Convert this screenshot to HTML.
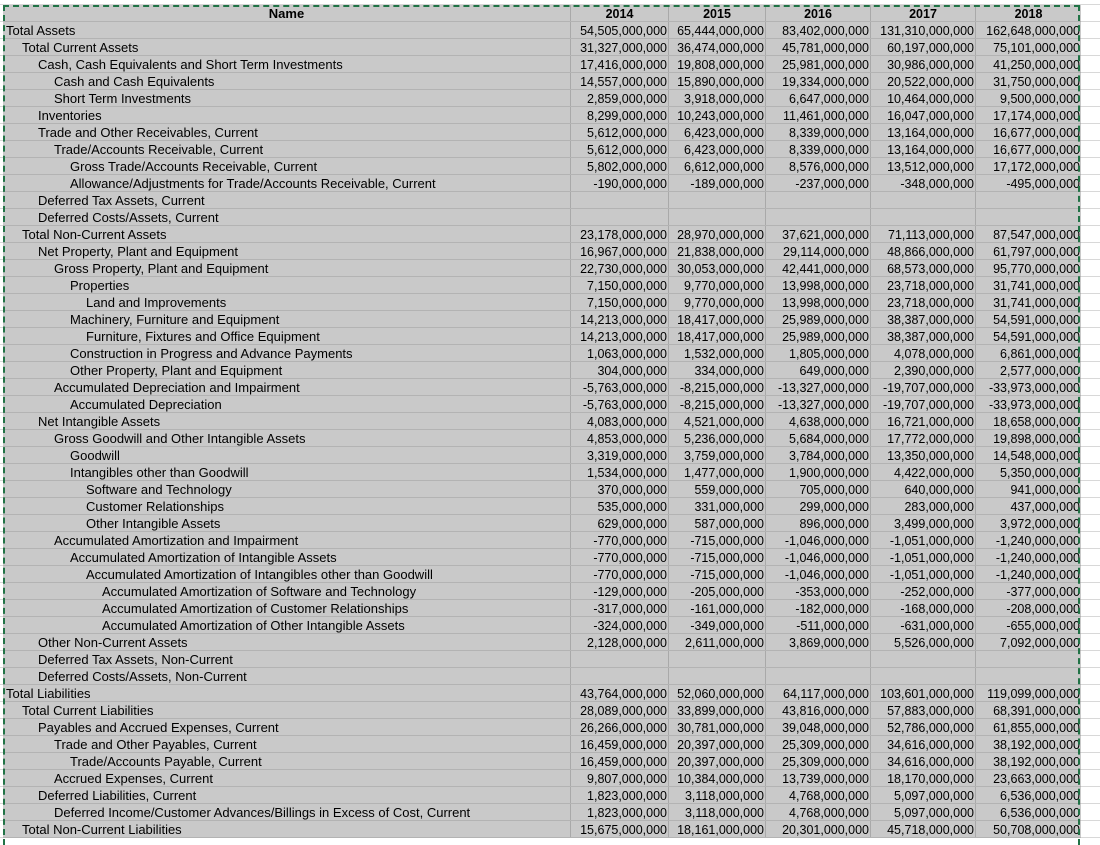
<!DOCTYPE html>
<html><head><meta charset="utf-8">
<style>
html,body{margin:0;padding:0;background:#fff;}
body{width:1100px;height:841px;overflow:hidden;position:relative;font-family:"Liberation Sans",Arial,sans-serif;font-size:12.5px;color:#000;
background-image:linear-gradient(#d8d8d8 1px,transparent 1px);background-size:100% 17px;background-position:0 4px;}
#sheet{position:absolute;left:3px;top:5px;width:1078px;background:#c9c9c9;}
.r{height:16px;line-height:18px;border-bottom:1px solid #b3b3b3;display:flex;white-space:nowrap;overflow:hidden;}
.n{width:568px;border-right:1px solid #a9a9a9;overflow:hidden;box-sizing:border-box;font-size:13px;}
.v{box-sizing:border-box;text-align:right;padding-right:1px;border-right:1px solid #a9a9a9;}
.c1{width:98px}.c2{width:97px}.c3{width:105px}.c4{width:105px}.c5{width:105px;border-right:none}
.h{font-weight:bold;text-align:center;padding:0}
.l0{padding-left:3px}.l1{padding-left:19px}.l2{padding-left:35px}.l3{padding-left:51px}.l4{padding-left:67px}.l5{padding-left:83px}.l6{padding-left:99px}
#sel{position:absolute;left:3px;top:5px;width:1077px;height:840px;border:2px dashed #217346;border-bottom:none;box-sizing:border-box;pointer-events:none;}
</style></head><body>
<div id="sheet">
<div class="r"><div class="n h" style="text-align:center">Name</div><div class="v c1 h">2014</div><div class="v c2 h">2015</div><div class="v c3 h">2016</div><div class="v c4 h">2017</div><div class="v c5 h">2018</div></div>
<div class="r"><div class="n l0">Total Assets</div><div class="v c1">54,505,000,000</div><div class="v c2">65,444,000,000</div><div class="v c3">83,402,000,000</div><div class="v c4">131,310,000,000</div><div class="v c5">162,648,000,000</div></div>
<div class="r"><div class="n l1">Total Current Assets</div><div class="v c1">31,327,000,000</div><div class="v c2">36,474,000,000</div><div class="v c3">45,781,000,000</div><div class="v c4">60,197,000,000</div><div class="v c5">75,101,000,000</div></div>
<div class="r"><div class="n l2">Cash, Cash Equivalents and Short Term Investments</div><div class="v c1">17,416,000,000</div><div class="v c2">19,808,000,000</div><div class="v c3">25,981,000,000</div><div class="v c4">30,986,000,000</div><div class="v c5">41,250,000,000</div></div>
<div class="r"><div class="n l3">Cash and Cash Equivalents</div><div class="v c1">14,557,000,000</div><div class="v c2">15,890,000,000</div><div class="v c3">19,334,000,000</div><div class="v c4">20,522,000,000</div><div class="v c5">31,750,000,000</div></div>
<div class="r"><div class="n l3">Short Term Investments</div><div class="v c1">2,859,000,000</div><div class="v c2">3,918,000,000</div><div class="v c3">6,647,000,000</div><div class="v c4">10,464,000,000</div><div class="v c5">9,500,000,000</div></div>
<div class="r"><div class="n l2">Inventories</div><div class="v c1">8,299,000,000</div><div class="v c2">10,243,000,000</div><div class="v c3">11,461,000,000</div><div class="v c4">16,047,000,000</div><div class="v c5">17,174,000,000</div></div>
<div class="r"><div class="n l2">Trade and Other Receivables, Current</div><div class="v c1">5,612,000,000</div><div class="v c2">6,423,000,000</div><div class="v c3">8,339,000,000</div><div class="v c4">13,164,000,000</div><div class="v c5">16,677,000,000</div></div>
<div class="r"><div class="n l3">Trade/Accounts Receivable, Current</div><div class="v c1">5,612,000,000</div><div class="v c2">6,423,000,000</div><div class="v c3">8,339,000,000</div><div class="v c4">13,164,000,000</div><div class="v c5">16,677,000,000</div></div>
<div class="r"><div class="n l4">Gross Trade/Accounts Receivable, Current</div><div class="v c1">5,802,000,000</div><div class="v c2">6,612,000,000</div><div class="v c3">8,576,000,000</div><div class="v c4">13,512,000,000</div><div class="v c5">17,172,000,000</div></div>
<div class="r"><div class="n l4">Allowance/Adjustments for Trade/Accounts Receivable, Current</div><div class="v c1">-190,000,000</div><div class="v c2">-189,000,000</div><div class="v c3">-237,000,000</div><div class="v c4">-348,000,000</div><div class="v c5">-495,000,000</div></div>
<div class="r"><div class="n l2">Deferred Tax Assets, Current</div><div class="v c1"></div><div class="v c2"></div><div class="v c3"></div><div class="v c4"></div><div class="v c5"></div></div>
<div class="r"><div class="n l2">Deferred Costs/Assets, Current</div><div class="v c1"></div><div class="v c2"></div><div class="v c3"></div><div class="v c4"></div><div class="v c5"></div></div>
<div class="r"><div class="n l1">Total Non-Current Assets</div><div class="v c1">23,178,000,000</div><div class="v c2">28,970,000,000</div><div class="v c3">37,621,000,000</div><div class="v c4">71,113,000,000</div><div class="v c5">87,547,000,000</div></div>
<div class="r"><div class="n l2">Net Property, Plant and Equipment</div><div class="v c1">16,967,000,000</div><div class="v c2">21,838,000,000</div><div class="v c3">29,114,000,000</div><div class="v c4">48,866,000,000</div><div class="v c5">61,797,000,000</div></div>
<div class="r"><div class="n l3">Gross Property, Plant and Equipment</div><div class="v c1">22,730,000,000</div><div class="v c2">30,053,000,000</div><div class="v c3">42,441,000,000</div><div class="v c4">68,573,000,000</div><div class="v c5">95,770,000,000</div></div>
<div class="r"><div class="n l4">Properties</div><div class="v c1">7,150,000,000</div><div class="v c2">9,770,000,000</div><div class="v c3">13,998,000,000</div><div class="v c4">23,718,000,000</div><div class="v c5">31,741,000,000</div></div>
<div class="r"><div class="n l5">Land and Improvements</div><div class="v c1">7,150,000,000</div><div class="v c2">9,770,000,000</div><div class="v c3">13,998,000,000</div><div class="v c4">23,718,000,000</div><div class="v c5">31,741,000,000</div></div>
<div class="r"><div class="n l4">Machinery, Furniture and Equipment</div><div class="v c1">14,213,000,000</div><div class="v c2">18,417,000,000</div><div class="v c3">25,989,000,000</div><div class="v c4">38,387,000,000</div><div class="v c5">54,591,000,000</div></div>
<div class="r"><div class="n l5">Furniture, Fixtures and Office Equipment</div><div class="v c1">14,213,000,000</div><div class="v c2">18,417,000,000</div><div class="v c3">25,989,000,000</div><div class="v c4">38,387,000,000</div><div class="v c5">54,591,000,000</div></div>
<div class="r"><div class="n l4">Construction in Progress and Advance Payments</div><div class="v c1">1,063,000,000</div><div class="v c2">1,532,000,000</div><div class="v c3">1,805,000,000</div><div class="v c4">4,078,000,000</div><div class="v c5">6,861,000,000</div></div>
<div class="r"><div class="n l4">Other Property, Plant and Equipment</div><div class="v c1">304,000,000</div><div class="v c2">334,000,000</div><div class="v c3">649,000,000</div><div class="v c4">2,390,000,000</div><div class="v c5">2,577,000,000</div></div>
<div class="r"><div class="n l3">Accumulated Depreciation and Impairment</div><div class="v c1">-5,763,000,000</div><div class="v c2">-8,215,000,000</div><div class="v c3">-13,327,000,000</div><div class="v c4">-19,707,000,000</div><div class="v c5">-33,973,000,000</div></div>
<div class="r"><div class="n l4">Accumulated Depreciation</div><div class="v c1">-5,763,000,000</div><div class="v c2">-8,215,000,000</div><div class="v c3">-13,327,000,000</div><div class="v c4">-19,707,000,000</div><div class="v c5">-33,973,000,000</div></div>
<div class="r"><div class="n l2">Net Intangible Assets</div><div class="v c1">4,083,000,000</div><div class="v c2">4,521,000,000</div><div class="v c3">4,638,000,000</div><div class="v c4">16,721,000,000</div><div class="v c5">18,658,000,000</div></div>
<div class="r"><div class="n l3">Gross Goodwill and Other Intangible Assets</div><div class="v c1">4,853,000,000</div><div class="v c2">5,236,000,000</div><div class="v c3">5,684,000,000</div><div class="v c4">17,772,000,000</div><div class="v c5">19,898,000,000</div></div>
<div class="r"><div class="n l4">Goodwill</div><div class="v c1">3,319,000,000</div><div class="v c2">3,759,000,000</div><div class="v c3">3,784,000,000</div><div class="v c4">13,350,000,000</div><div class="v c5">14,548,000,000</div></div>
<div class="r"><div class="n l4">Intangibles other than Goodwill</div><div class="v c1">1,534,000,000</div><div class="v c2">1,477,000,000</div><div class="v c3">1,900,000,000</div><div class="v c4">4,422,000,000</div><div class="v c5">5,350,000,000</div></div>
<div class="r"><div class="n l5">Software and Technology</div><div class="v c1">370,000,000</div><div class="v c2">559,000,000</div><div class="v c3">705,000,000</div><div class="v c4">640,000,000</div><div class="v c5">941,000,000</div></div>
<div class="r"><div class="n l5">Customer Relationships</div><div class="v c1">535,000,000</div><div class="v c2">331,000,000</div><div class="v c3">299,000,000</div><div class="v c4">283,000,000</div><div class="v c5">437,000,000</div></div>
<div class="r"><div class="n l5">Other Intangible Assets</div><div class="v c1">629,000,000</div><div class="v c2">587,000,000</div><div class="v c3">896,000,000</div><div class="v c4">3,499,000,000</div><div class="v c5">3,972,000,000</div></div>
<div class="r"><div class="n l3">Accumulated Amortization and Impairment</div><div class="v c1">-770,000,000</div><div class="v c2">-715,000,000</div><div class="v c3">-1,046,000,000</div><div class="v c4">-1,051,000,000</div><div class="v c5">-1,240,000,000</div></div>
<div class="r"><div class="n l4">Accumulated Amortization of Intangible Assets</div><div class="v c1">-770,000,000</div><div class="v c2">-715,000,000</div><div class="v c3">-1,046,000,000</div><div class="v c4">-1,051,000,000</div><div class="v c5">-1,240,000,000</div></div>
<div class="r"><div class="n l5">Accumulated Amortization of Intangibles other than Goodwill</div><div class="v c1">-770,000,000</div><div class="v c2">-715,000,000</div><div class="v c3">-1,046,000,000</div><div class="v c4">-1,051,000,000</div><div class="v c5">-1,240,000,000</div></div>
<div class="r"><div class="n l6">Accumulated Amortization of Software and Technology</div><div class="v c1">-129,000,000</div><div class="v c2">-205,000,000</div><div class="v c3">-353,000,000</div><div class="v c4">-252,000,000</div><div class="v c5">-377,000,000</div></div>
<div class="r"><div class="n l6">Accumulated Amortization of Customer Relationships</div><div class="v c1">-317,000,000</div><div class="v c2">-161,000,000</div><div class="v c3">-182,000,000</div><div class="v c4">-168,000,000</div><div class="v c5">-208,000,000</div></div>
<div class="r"><div class="n l6">Accumulated Amortization of Other Intangible Assets</div><div class="v c1">-324,000,000</div><div class="v c2">-349,000,000</div><div class="v c3">-511,000,000</div><div class="v c4">-631,000,000</div><div class="v c5">-655,000,000</div></div>
<div class="r"><div class="n l2">Other Non-Current Assets</div><div class="v c1">2,128,000,000</div><div class="v c2">2,611,000,000</div><div class="v c3">3,869,000,000</div><div class="v c4">5,526,000,000</div><div class="v c5">7,092,000,000</div></div>
<div class="r"><div class="n l2">Deferred Tax Assets, Non-Current</div><div class="v c1"></div><div class="v c2"></div><div class="v c3"></div><div class="v c4"></div><div class="v c5"></div></div>
<div class="r"><div class="n l2">Deferred Costs/Assets, Non-Current</div><div class="v c1"></div><div class="v c2"></div><div class="v c3"></div><div class="v c4"></div><div class="v c5"></div></div>
<div class="r"><div class="n l0">Total Liabilities</div><div class="v c1">43,764,000,000</div><div class="v c2">52,060,000,000</div><div class="v c3">64,117,000,000</div><div class="v c4">103,601,000,000</div><div class="v c5">119,099,000,000</div></div>
<div class="r"><div class="n l1">Total Current Liabilities</div><div class="v c1">28,089,000,000</div><div class="v c2">33,899,000,000</div><div class="v c3">43,816,000,000</div><div class="v c4">57,883,000,000</div><div class="v c5">68,391,000,000</div></div>
<div class="r"><div class="n l2">Payables and Accrued Expenses, Current</div><div class="v c1">26,266,000,000</div><div class="v c2">30,781,000,000</div><div class="v c3">39,048,000,000</div><div class="v c4">52,786,000,000</div><div class="v c5">61,855,000,000</div></div>
<div class="r"><div class="n l3">Trade and Other Payables, Current</div><div class="v c1">16,459,000,000</div><div class="v c2">20,397,000,000</div><div class="v c3">25,309,000,000</div><div class="v c4">34,616,000,000</div><div class="v c5">38,192,000,000</div></div>
<div class="r"><div class="n l4">Trade/Accounts Payable, Current</div><div class="v c1">16,459,000,000</div><div class="v c2">20,397,000,000</div><div class="v c3">25,309,000,000</div><div class="v c4">34,616,000,000</div><div class="v c5">38,192,000,000</div></div>
<div class="r"><div class="n l3">Accrued Expenses, Current</div><div class="v c1">9,807,000,000</div><div class="v c2">10,384,000,000</div><div class="v c3">13,739,000,000</div><div class="v c4">18,170,000,000</div><div class="v c5">23,663,000,000</div></div>
<div class="r"><div class="n l2">Deferred Liabilities, Current</div><div class="v c1">1,823,000,000</div><div class="v c2">3,118,000,000</div><div class="v c3">4,768,000,000</div><div class="v c4">5,097,000,000</div><div class="v c5">6,536,000,000</div></div>
<div class="r"><div class="n l3">Deferred Income/Customer Advances/Billings in Excess of Cost, Current</div><div class="v c1">1,823,000,000</div><div class="v c2">3,118,000,000</div><div class="v c3">4,768,000,000</div><div class="v c4">5,097,000,000</div><div class="v c5">6,536,000,000</div></div>
<div class="r"><div class="n l1">Total Non-Current Liabilities</div><div class="v c1">15,675,000,000</div><div class="v c2">18,161,000,000</div><div class="v c3">20,301,000,000</div><div class="v c4">45,718,000,000</div><div class="v c5">50,708,000,000</div></div>
</div>
<div id="sel"></div>
</body></html>
